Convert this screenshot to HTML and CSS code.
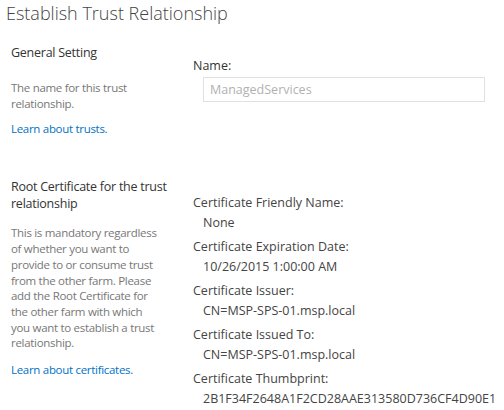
FILE: index.html
```html
<!DOCTYPE html>
<html lang="en">
<head>
  <meta charset="UTF-8" />
  <title>Establish Trust Relationship</title>
  <link rel="stylesheet" href="styles.css">
</head>
<body>
  <h1 class="page-title">Establish Trust Relationship</h1>

  <div class="section section-general">
    <div class="section-info">
      <h2>General Setting</h2>
      <p class="desc">The name for this trust<br>relationship.</p>
      <a class="learn" href="#">Learn about trusts.</a>
    </div>
    <div class="section-body">
      <label class="field-label" for="name">Name:</label>
      <input class="field-input" id="name" type="text" placeholder="ManagedServices" disabled />
    </div>
  </div>

  <div class="section section-cert">
    <div class="section-info">
      <h2>Root Certificate for the trust<br>relationship</h2>
      <p class="desc">This is mandatory regardless<br>of whether you want to<br>provide to or consume trust<br>from the other farm. Please<br>add the Root Certificate for<br>the other farm with which<br>you want to establish a trust<br>relationship.</p>
      <a class="learn" href="#">Learn about certificates.</a>
    </div>
    <div class="section-body">
      <dl class="cert">
        <dt>Certificate Friendly Name:</dt>
        <dd>None</dd>
        <dt>Certificate Expiration Date:</dt>
        <dd>10/26/2015 1:00:00 AM</dd>
        <dt>Certificate Issuer:</dt>
        <dd>CN=MSP-SPS-01.msp.local</dd>
        <dt>Certificate Issued To:</dt>
        <dd>CN=MSP-SPS-01.msp.local</dd>
        <dt>Certificate Thumbprint:</dt>
        <dd>2B1F34F2648A1F2CD28AAE313580D736CF4D90E1</dd>
      </dl>
    </div>
  </div>
</body>
</html>
```

FILE: styles.css
```css
body {
  font-family: "Open Sans", "Noto Sans", sans-serif;
  background: #fff;
  color: #444;
  margin: 0;
  padding: 0 0 0 6px;
}
.page-title {
  font-size: 18px;
  font-weight: 300;
  color: #444;
  margin: 0;
  padding-top: 1px;
  line-height: 24px;
}
.section {
  display: flex;
}
.section-info {
  width: 170px;
  padding-left: 5px;
  flex-shrink: 0;
}
.section-body {
  padding-left: 12px;
  flex: 1;
}
h2 {
  font-size: 12.5px;
  font-weight: 400;
  color: #333;
  margin: 0;
  line-height: 17px;
  letter-spacing: -0.25px;
  white-space: nowrap;
}
.desc {
  font-size: 11.5px;
  color: #777;
  line-height: 15.7px;
  letter-spacing: -0.3px;
  margin: 0;
  white-space: nowrap;
}
.learn {
  display: block;
  font-size: 11.5px;
  color: #0072c6;
  text-decoration: none;
  line-height: 16px;
  letter-spacing: -0.3px;
}
.section-general {
  padding-top: 19px;
}
.section-general .desc {
  margin-top: 19px;
}
.section-general .learn {
  margin-top: 10px;
}
.section-general .section-body {
  padding-top: 14px;
}
.field-label {
  display: block;
  font-size: 12.5px;
  color: #333;
  line-height: 16px;
}
.field-input {
  display: block;
  margin: 3px 0 0 10px;
  width: 282px;
  height: 25px;
  box-sizing: border-box;
  border: 1px solid #e1e1e1;
  background: #fff;
  padding: 0 6px;
  font-family: inherit;
  font-size: 12.5px;
}
.field-input::placeholder {
  color: #b1b1b1;
}
.section-cert {
  padding-top: 41px;
}
.section-cert .desc {
  margin-top: 13px;
}
.section-cert .learn {
  margin-top: 11px;
}
.section-cert .section-body {
  padding-top: 15px;
}
.cert {
  margin: 0;
  font-size: 12.5px;
  color: #444;
}
.cert dt {
  line-height: 20px;
}
.cert dd {
  margin: 0 0 4px 10px;
  line-height: 20px;
}
```
